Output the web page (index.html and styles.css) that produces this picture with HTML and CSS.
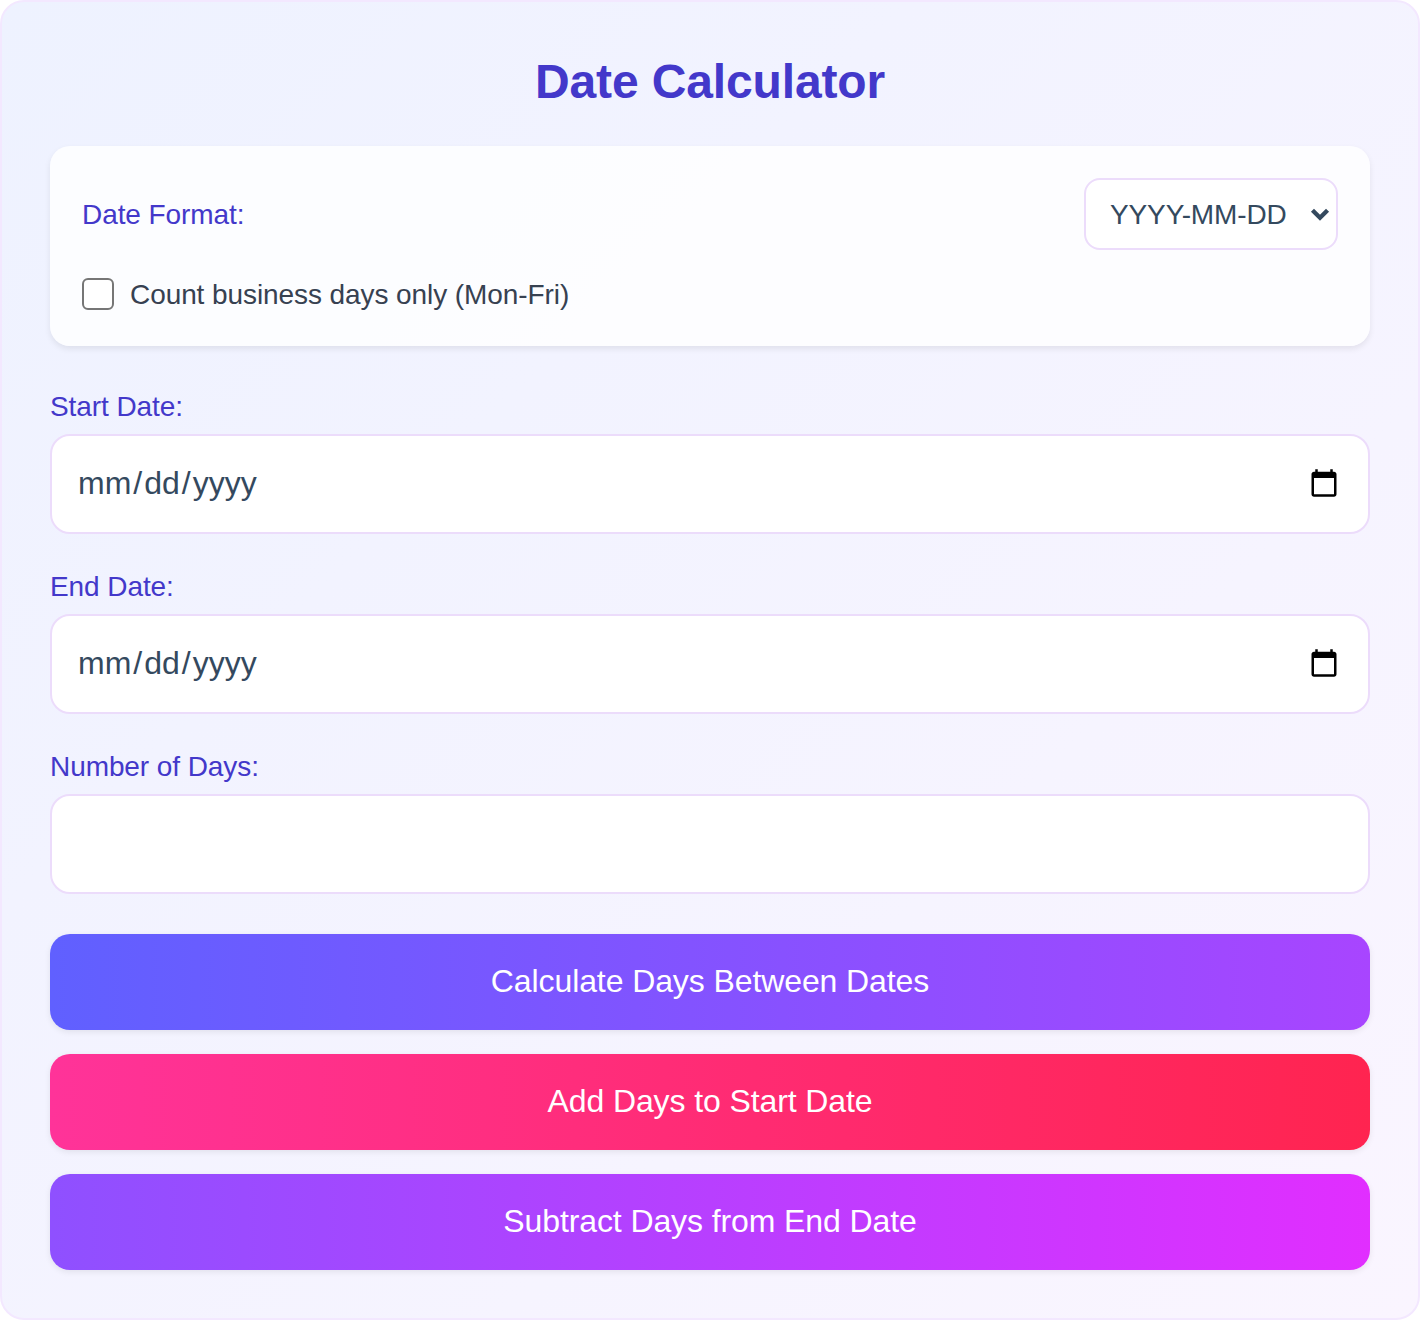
FILE: index.html
```html
<!DOCTYPE html>
<html lang="en">
<head>
    <meta charset="UTF-8">
    <meta name="viewport" content="width=device-width, initial-scale=1.0">
    <title>Date Calculator</title>
    <link rel="stylesheet" href="styles.css">
</head>
<body>

<div class="calculator">
    <h1>Date Calculator</h1>

    <div class="options-card">
        <div class="format-row">
            <label for="dateFormat">Date Format:</label>
            <div class="select-wrap">
                <select id="dateFormat">
                    <option>YYYY-MM-DD</option>
                    <option>MM/DD/YYYY</option>
                    <option>DD/MM/YYYY</option>
                </select>
                <svg class="select-arrow" viewBox="0 0 18 13" aria-hidden="true">
                    <path d="M2 3l7 7 7-7" fill="none" stroke="currentColor" stroke-width="4"/>
                </svg>
            </div>
        </div>
        <label class="check-row">
            <input type="checkbox" id="businessDays">
            <span>Count business days only (Mon-Fri)</span>
        </label>
    </div>

    <div class="field">
        <label for="startDate">Start Date:</label>
        <input type="date" id="startDate">
    </div>

    <div class="field">
        <label for="endDate">End Date:</label>
        <input type="date" id="endDate">
    </div>

    <div class="field">
        <label for="numDays">Number of Days:</label>
        <input type="number" id="numDays">
    </div>

    <div class="actions">
        <button class="btn btn-between">Calculate Days Between Dates</button>
        <button class="btn btn-add">Add Days to Start Date</button>
        <button class="btn btn-subtract">Subtract Days from End Date</button>
    </div>
</div>

</body>
</html>
```

FILE: styles.css
```css
* {
    box-sizing: border-box;
}

body {
    margin: 0;
    font-family: "Liberation Sans", Arial, sans-serif;
    color: #34495e;
    background-color: #fff;
}

.calculator {
    width: 1420px;
    height: 1320px;
    padding: 48px;
    border: 2px solid #f3e8ff;
    border-radius: 24px;
    background: linear-gradient(135deg, #eef2ff, #faf5ff);
}

h1 {
    margin: 0 0 32px;
    font-size: 48px;
    line-height: 64px;
    font-weight: 700;
    letter-spacing: -0.13px;
    text-align: center;
    color: #4338ca;
}

label {
    padding-top: 2px;
    font-size: 28px;
    line-height: 38px;
    letter-spacing: -0.08px;
    color: #4338ca;
}

.options-card {
    height: 200px;
    margin-bottom: 40px;
    padding: 32px;
    border-radius: 20px;
    background-color: rgba(255, 255, 255, 0.8);
    box-shadow: 0 3px 6px rgba(0, 0, 0, 0.08);
}

.format-row {
    display: flex;
    justify-content: space-between;
    align-items: center;
    margin-bottom: 24px;
}

.select-wrap {
    position: relative;
    color: #34495e;
}

select {
    display: block;
    width: 254px;
    height: 72px;
    padding: 0 24px;
    border: 2px solid #ecdcfb;
    border-radius: 16px;
    font-family: inherit;
    font-size: 28px;
    letter-spacing: -0.12px;
    color: inherit;
    background-color: #fff;
    appearance: none;
}

.select-arrow {
    position: absolute;
    top: 29px;
    right: 8px;
    width: 20px;
    height: 14px;
}

.check-row {
    display: flex;
    align-items: center;
    gap: 16px;
    padding-top: 0;
    color: #374151;
}

.check-row span {
    padding-top: 2px;
}

.check-row input {
    width: 32px;
    height: 32px;
    margin: 0;
    border: 2px solid #767676;
    border-radius: 6px;
    background-color: #fff;
    appearance: none;
}

.field {
    margin-bottom: 32px;
}

.field label {
    display: block;
    margin-bottom: 8px;
}

.field input {
    display: block;
    width: 100%;
    height: 100px;
    padding: 0 24px 1px 25px;
    border: 2px solid #ecdcfb;
    border-radius: 20px;
    font-family: inherit;
    font-size: 32px;
    color: #34495e;
    background-color: #fff;
}

.field input::-webkit-datetime-edit-text {
    padding: 0 1px;
}

.field input::-webkit-calendar-picker-indicator {
    width: 30px;
    height: 30px;
    margin: 0 5px 2px 0;
    padding: 0;
    background: url("data:image/svg+xml,%3Csvg xmlns='http://www.w3.org/2000/svg' viewBox='0 0 24 24'%3E%3Cpath d='M20 3h-1V1h-2v2H7V1H5v2H4c-1.1 0-2 .9-2 2v16c0 1.1.9 2 2 2h16c1.1 0 2-.9 2-2V5c0-1.1-.9-2-2-2zm0 18H4V8h16v13z'/%3E%3C/svg%3E") center / contain no-repeat;
}

.actions {
    display: flex;
    flex-direction: column;
    gap: 24px;
    margin-top: 40px;
}

.btn {
    height: 96px;
    padding: 0 0 2px;
    border: none;
    border-radius: 20px;
    font-family: inherit;
    font-size: 32px;
    letter-spacing: -0.1px;
    color: #fff;
    box-shadow: 0 2px 6px rgba(0, 0, 0, 0.08);
    cursor: pointer;
}

.btn-between {
    background: linear-gradient(90deg, #6060ff, #a845ff);
}

.btn-add {
    background: linear-gradient(90deg, #ff3399, #ff2450);
}

.btn-subtract {
    background: linear-gradient(90deg, #8f50ff, #e12eff);
}
```
